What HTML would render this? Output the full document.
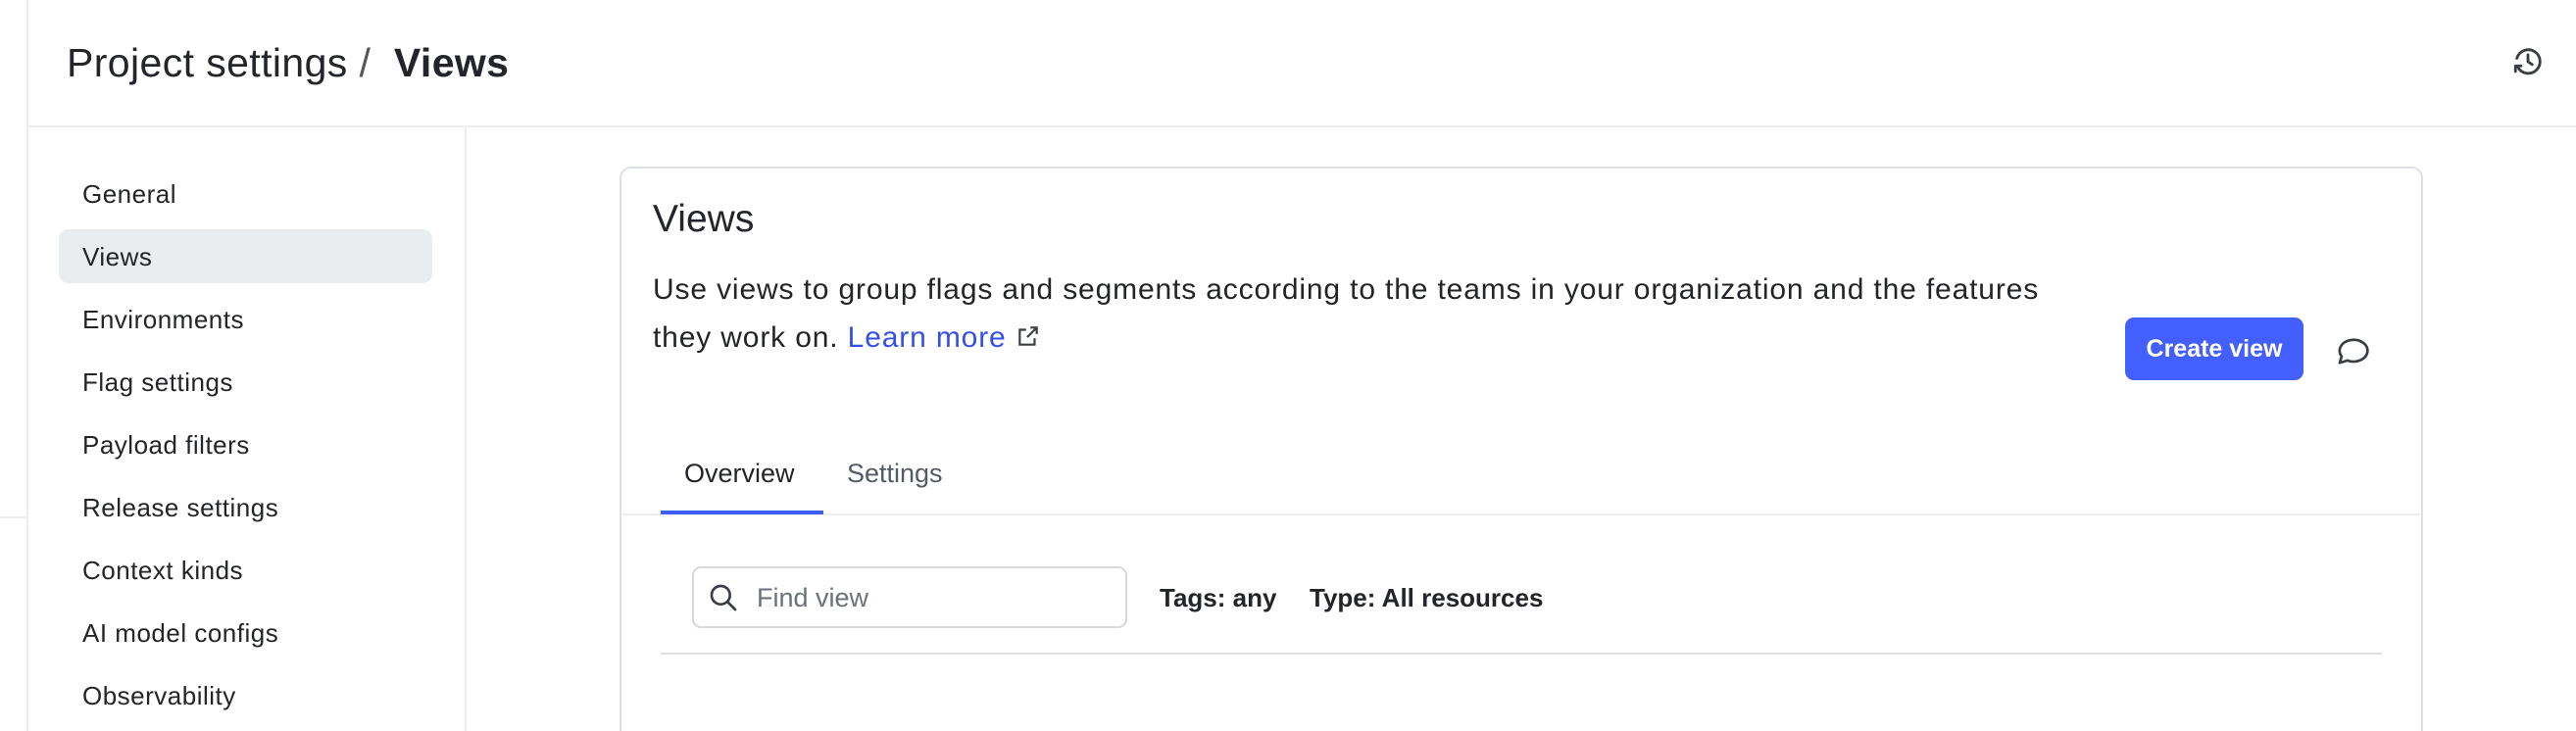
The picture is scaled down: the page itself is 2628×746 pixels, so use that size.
<!DOCTYPE html>
<html><head><meta charset="utf-8"><style>
*{box-sizing:border-box;margin:0;padding:0}
html,body{width:2628px;height:746px;overflow:hidden}
body{background:#fff;font-family:"Liberation Sans",sans-serif;color:#23252a;position:relative}
.abs{position:absolute;white-space:nowrap}
.vl{position:absolute;left:27px;top:0;width:2px;height:746px;background:#eceef1}
.hl0{position:absolute;left:0;top:527px;width:27px;height:2px;background:#eceef1}
.hdr{position:absolute;left:29px;top:128px;width:2599px;height:2px;background:#eceef1}
.side{position:absolute;left:474px;top:130px;width:2px;height:616px;background:#eceef1}
.nav{position:absolute;left:84px;font-size:26px;line-height:32px;letter-spacing:0.5px}
.sel{position:absolute;left:60px;top:234px;width:381px;height:55px;background:#e9edf0;border-radius:10px}
.card{position:absolute;left:632px;top:170px;width:1840px;height:576px;border:2px solid #dde0e4;border-bottom:none;border-radius:12px 12px 0 0}
.btn{position:absolute;left:2168px;top:324px;width:182px;height:64px;background:#435ffd;border-radius:9px;color:#fff;font-weight:bold;font-size:25px;line-height:64px;text-align:center}
.inp{position:absolute;left:706px;top:578px;width:444px;height:63px;border:2px solid #d6d9de;border-radius:9px}
</style></head><body>
<div class="vl"></div><div class="hl0"></div><div class="hdr"></div><div class="side"></div>
<div class="abs" style="left:68px;top:40px;font-size:41px;line-height:48px;letter-spacing:0.4px">Project settings <span style="color:#555;font-weight:300">/</span> &nbsp;<b style="font-weight:600">Views</b></div>
<svg class="abs" style="left:2562px;top:46px" width="34" height="34" viewBox="0 0 24 24" fill="none" stroke="#3a3d44" stroke-width="2" stroke-linecap="round" stroke-linejoin="round"><path d="M4.5 15.5A8.5 8.5 0 1 0 4 9.5"/><path d="M3 19v-4h4"/><path d="M12 7v5l3 2"/></svg>
<div class="sel"></div>
<div class="nav" style="top:182px">General</div>
<div class="nav" style="top:246px">Views</div>
<div class="nav" style="top:310px">Environments</div>
<div class="nav" style="top:374px">Flag settings</div>
<div class="nav" style="top:438px">Payload filters</div>
<div class="nav" style="top:502px">Release settings</div>
<div class="nav" style="top:566px">Context kinds</div>
<div class="nav" style="top:630px">AI model configs</div>
<div class="nav" style="top:694px">Observability</div>
<div class="card"></div>
<div class="abs" style="left:666px;top:201px;font-size:39px;line-height:46px">Views</div>
<div class="abs" style="left:666px;top:271px;font-size:30px;line-height:49px;letter-spacing:0.85px">Use views to group flags and segments according to the teams in your organization and the features<br>they work on. <span style="color:#3550e6">Learn more</span> <svg width="26" height="26" viewBox="0 0 24 24" fill="none" stroke="#3a3d44" stroke-width="2" style="vertical-align:-2px"><path d="M14 4h6v6M20 4l-9 9M18 14v6H4V6h6"/></svg></div>
<div class="btn">Create view</div>
<svg class="abs" style="left:2383px;top:338px" width="38" height="36" viewBox="0 0 24 22" fill="none" stroke="#3a3d44" stroke-width="1.7" stroke-linejoin="round"><path d="M2.5 20l1.2-4.2A9 7 0 1 1 7.5 18.5z"/></svg>
<div class="abs" style="left:698px;top:466px;font-size:27px;line-height:34px">Overview</div>
<div class="abs" style="left:864px;top:466px;font-size:27px;line-height:34px;color:#555a63">Settings</div>
<div class="abs" style="left:634px;top:524px;width:1836px;height:2px;background:#eceef1"></div>
<div class="abs" style="left:674px;top:521px;width:166px;height:4px;background:#3f5ef5"></div>
<div class="inp"></div>
<svg class="abs" style="left:722px;top:594px" width="32" height="32" viewBox="0 0 24 24" fill="none" stroke="#3a3d44" stroke-width="2" stroke-linecap="round"><circle cx="10" cy="10" r="7"/><path d="M15 15l6 6"/></svg>
<div class="abs" style="left:772px;top:594px;font-size:27px;line-height:32px;color:#6b707a">Find view</div>
<div class="abs" style="left:1183px;top:594px;font-size:26px;line-height:32px;font-weight:bold">Tags: any</div>
<div class="abs" style="left:1336px;top:594px;font-size:26px;line-height:32px;font-weight:bold">Type: All resources</div>
<div class="abs" style="left:674px;top:666px;width:1756px;height:2px;background:#dde0e4"></div>
</body></html>
